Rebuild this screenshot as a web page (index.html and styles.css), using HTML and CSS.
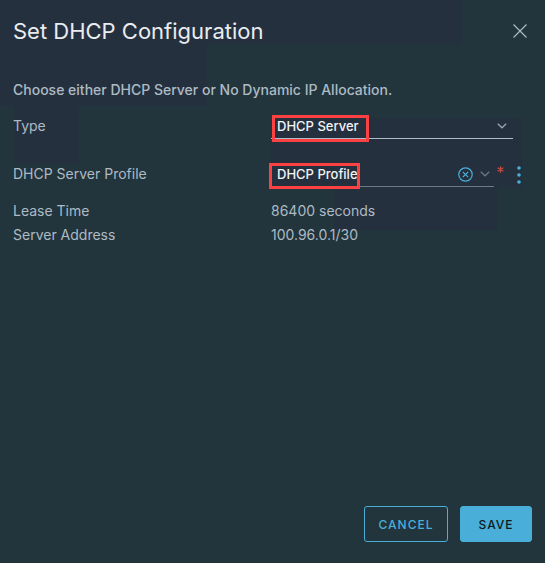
FILE: index.html
```html
<!DOCTYPE html>
<html lang="en">
<head>
<meta charset="utf-8">
<meta name="viewport" content="width=device-width, initial-scale=1">
<title>Set DHCP Configuration</title>
<link rel="stylesheet" href="styles.css">
</head>
<body>
<form class="dialog">
  <header class="header">
    <h1 class="title">Set DHCP Configuration</h1>
    <button class="icon-button" type="button" aria-label="Close">
      <svg width="14" height="14" viewBox="0 0 14 14"><path d="M0.5 0.5 13.5 13.5M13.5 0.5 0.5 13.5"/></svg>
    </button>
  </header>
  <main class="content">
    <p class="intro">Choose either DHCP Server or No Dynamic IP Allocation.</p>
    <div class="row row-field">
      <label for="type">Type</label>
      <div class="field field-type">
        <select class="control" id="type"><option>DHCP Server</option></select>
        <svg class="chevron" width="10" height="6" viewBox="0 0 10 6"><path d="M0.8 0.8 5 4.8 9.2 0.8"/></svg>
        <span class="highlight highlight-type"></span>
      </div>
    </div>
    <div class="row row-field">
      <label for="profile">DHCP Server Profile</label>
      <div class="profile">
        <div class="field field-profile">
          <input class="control" id="profile" type="text" value="DHCP Profile" required>
          <button class="icon-button clear" type="button" aria-label="Clear profile">
            <svg width="15" height="15" viewBox="0 0 15 15"><circle cx="7.5" cy="7.5" r="6.7"/><path d="M4.8 4.8 10.2 10.2M10.2 4.8 4.8 10.2"/></svg>
          </button>
          <svg class="chevron" width="10" height="6" viewBox="0 0 10 6"><path d="M0.8 0.8 5 4.8 9.2 0.8"/></svg>
          <span class="highlight highlight-profile"></span>
        </div>
        <svg class="required" width="7" height="7" viewBox="0 0 7 7"><path d="M3.5 0.2V6.8M0.6 1.8 6.4 5.2M6.4 1.8 0.6 5.2"/></svg>
        <button class="icon-button more" type="button" aria-label="More actions">
          <svg width="4" height="18" viewBox="0 0 4 18"><circle cx="2" cy="2" r="1.8"/><circle cx="2" cy="9" r="1.8"/><circle cx="2" cy="16" r="1.8"/></svg>
        </button>
      </div>
    </div>
    <dl class="details">
      <div class="row"><dt>Lease Time</dt><dd>86400 seconds</dd></div>
      <div class="row"><dt>Server Address</dt><dd>100.96.0.1/30</dd></div>
    </dl>
  </main>
  <footer class="footer">
    <button class="button button-outline" type="button">CANCEL</button>
    <button class="button button-primary" type="submit">SAVE</button>
  </footer>
</form>
</body>
</html>
```
FILE: styles.css
```css
* { box-sizing: border-box; }

body {
  margin: 0;
  color: #adbbc4;
  background: #22343c;
  font-family: Inter, "Noto Sans", sans-serif;
  font-size: 14px;
  line-height: 24px;
}

.dialog {
  --tint: linear-gradient(#25303f, #25303f);
  min-height: 100vh;
  display: flex;
  flex-direction: column;
  padding: 16px 13px 21px;
  background:
    var(--tint) 0 0 / 462px 44px,
    var(--tint) 0 44px / 207px 62px,
    var(--tint) 14px 106px / 65px 58px,
    var(--tint) 271px 118px / 251px 70px,
    var(--tint) 334px 188px / 164px 42px;
  background-repeat: no-repeat;
}

.header {
  display: flex;
  align-items: center;
  justify-content: space-between;
  padding-right: 5px;
}

.title {
  margin: 0;
  color: #e9ecef;
  font-size: 22px;
  font-weight: 400;
  line-height: 30px;
}

.icon-button {
  display: flex;
  padding: 0;
  border: 0;
  background: none;
  color: #adbbc4;
}

svg {
  flex: none;
  fill: none;
  stroke: currentColor;
  stroke-width: 1.2;
}

.content { flex: 1; }

.intro {
  margin: 32px 0 12px;
  font-weight: 500;
}

.row {
  display: grid;
  grid-template-columns: 258px minmax(0, 1fr);
}

.row-field { margin-bottom: 23px; }

.field {
  position: relative;
  display: flex;
  align-items: center;
  min-width: 0;
  height: 25px;
  border-bottom: 1px solid #adbbc4;
}

.field-type {
  margin-right: 19px;
  padding-right: 6px;
}

.control {
  flex: 1;
  min-width: 0;
  height: 24px;
  padding: 0 0 0 6px;
  border: 0;
  outline: 0;
  appearance: none;
  background: none;
  color: #f1f4f6;
  font: 500 13px Inter, "Noto Sans", sans-serif;
}

.chevron { color: #9ba8b0; }

.profile {
  display: flex;
  align-items: center;
}

.field-profile {
  flex: 1;
  gap: 7px;
  padding-right: 4px;
  border-color: #6d7983;
}

.field-profile .chevron { color: #6d7983; }

.clear, .more { color: #49afd9; }

.required {
  align-self: flex-start;
  margin: 4px 13px 0 3px;
  color: #c84b42;
}

.more { margin-right: 11px; }

.more svg {
  fill: currentColor;
  stroke: none;
}

.highlight {
  position: absolute;
  border: 3px solid #fb4141;
  pointer-events: none;
}

.highlight-type {
  top: 1px;
  left: 1px;
  width: 97px;
  height: 27px;
}

.highlight-profile {
  top: 1px;
  left: -2px;
  width: 91px;
  height: 26px;
}

.details { margin: -11px 0 0; }

dd { margin: 0; }

.footer {
  display: flex;
  justify-content: flex-end;
  gap: 12px;
}

.button {
  height: 36px;
  padding: 0 12px;
  border: 1px solid #49afd9;
  border-radius: 3px;
  font: 500 12px Inter, "Noto Sans", sans-serif;
  letter-spacing: 1px;
}

.button-outline {
  min-width: 84px;
  background: none;
  color: #49afd9;
}

.button-primary {
  min-width: 72px;
  background: #49afd9;
  color: #0b1a22;
}
```
